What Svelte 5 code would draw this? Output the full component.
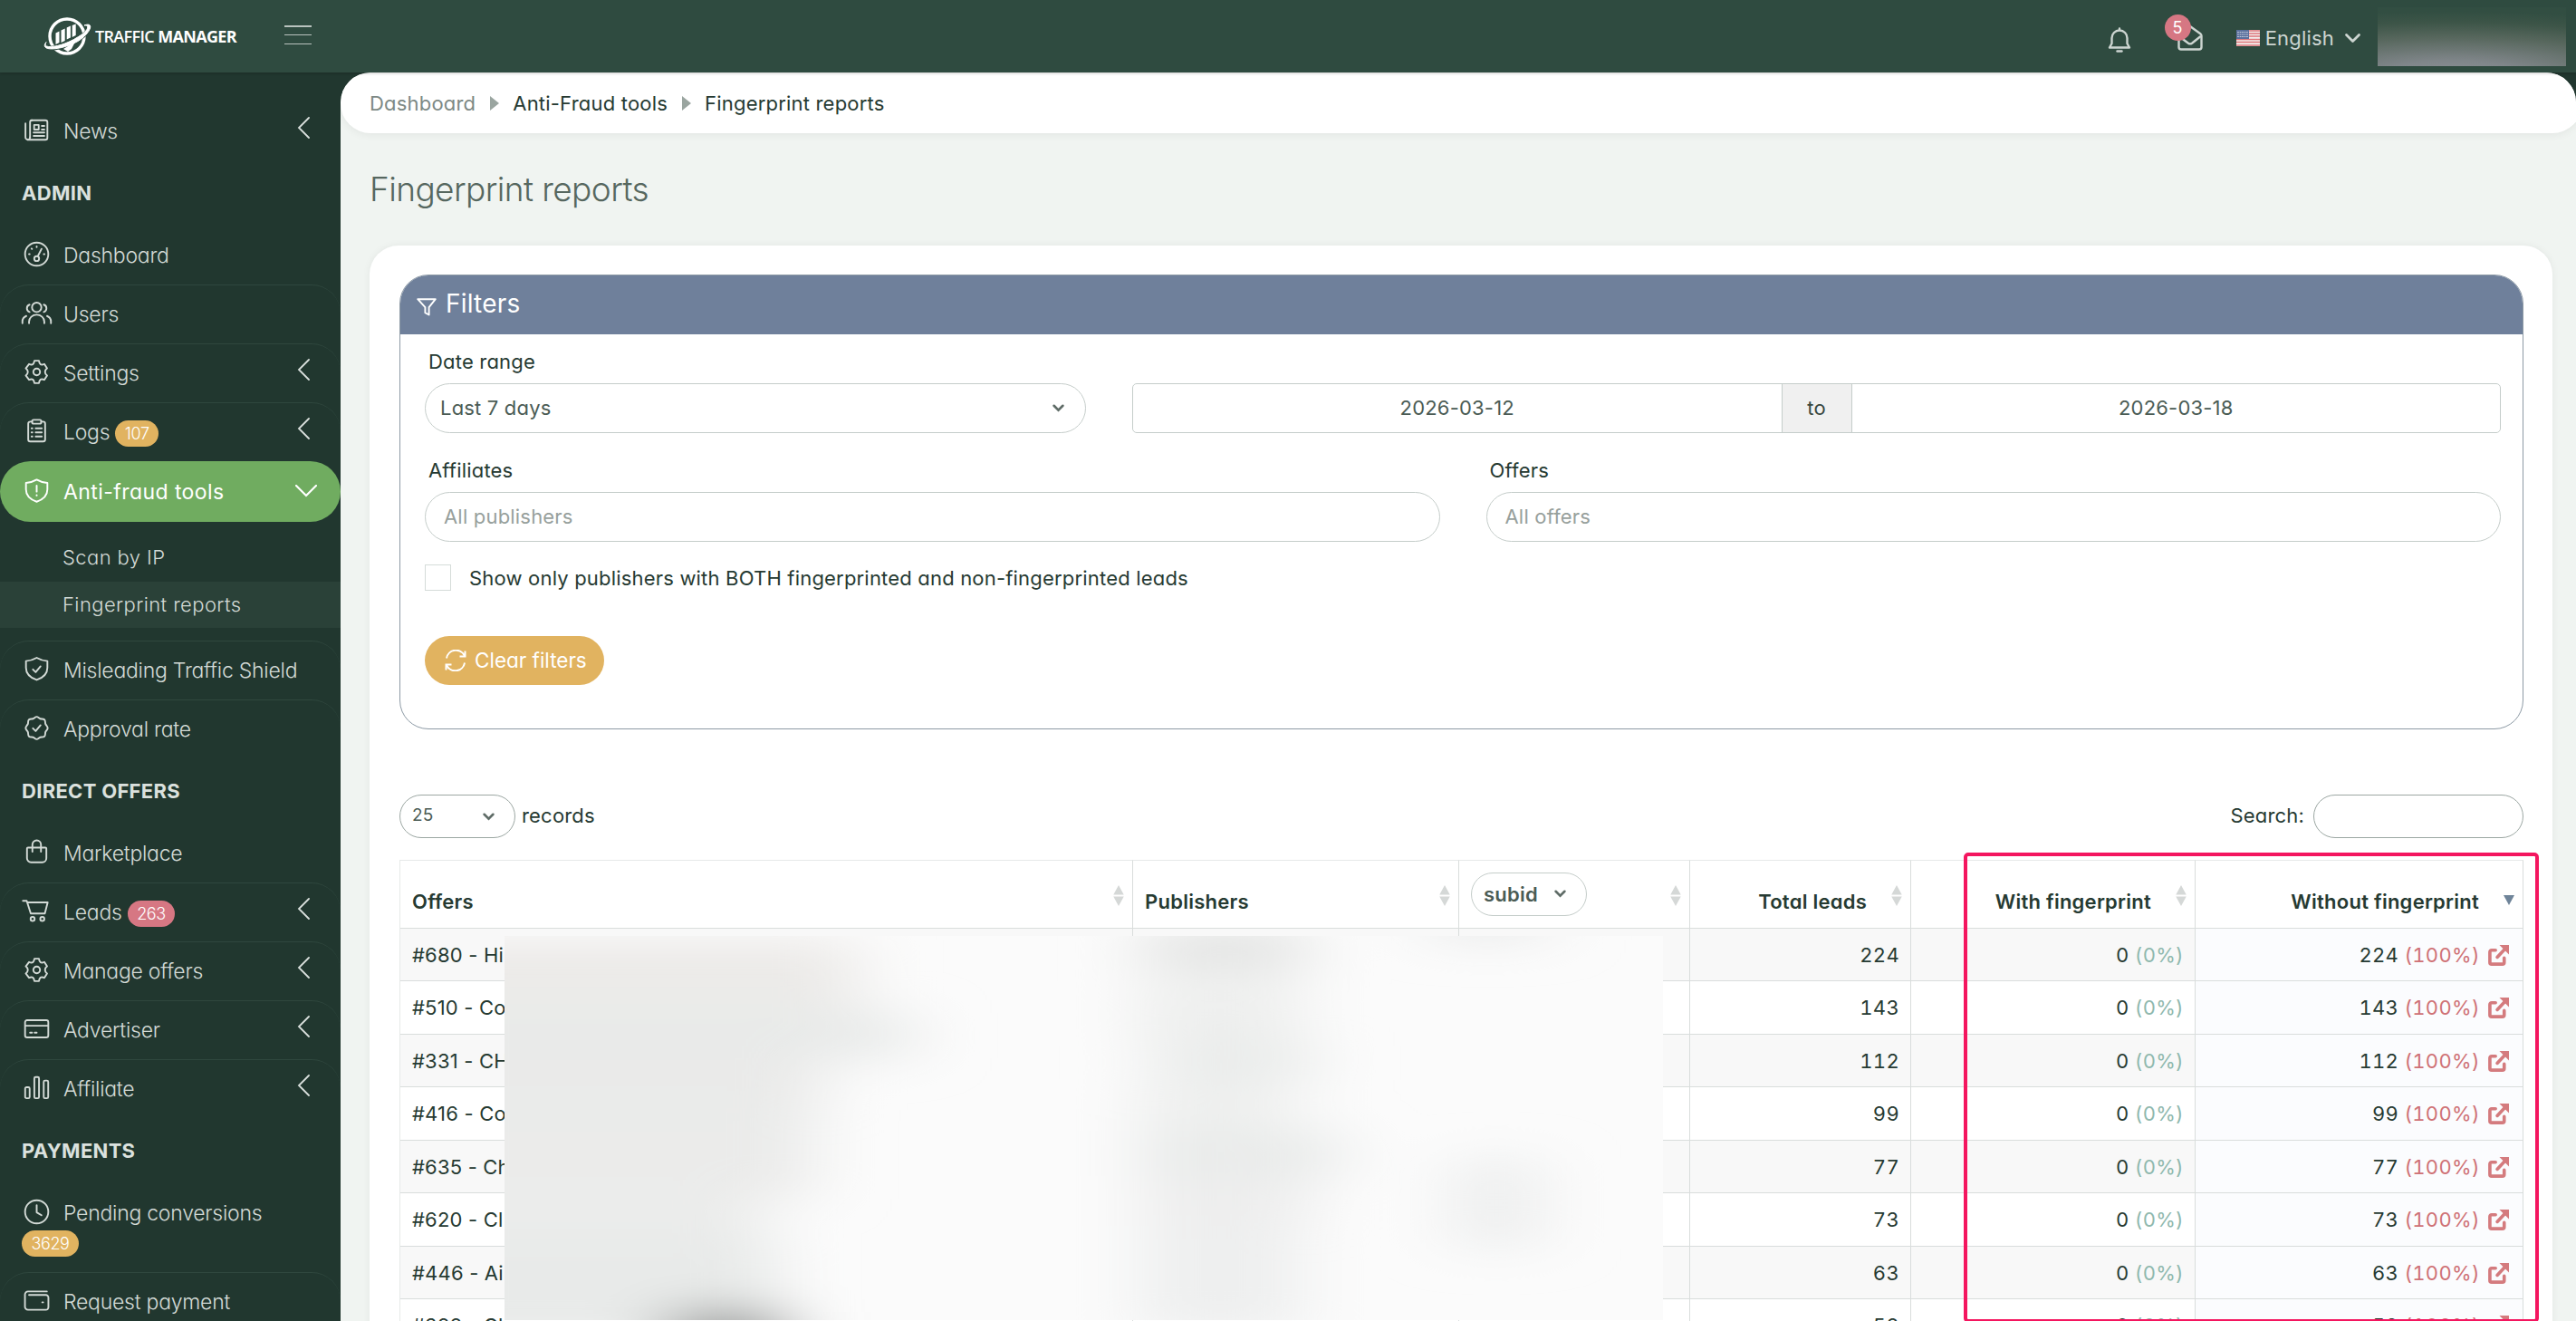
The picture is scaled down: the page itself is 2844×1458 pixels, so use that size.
<script lang="ts">
	type NavItem = {
		label: string;
		icon: string;
		badge?: string;
		badgeColor?: 'amber' | 'rose';
		expandable?: boolean;
		active?: boolean;
		wrap?: boolean;
		children?: { label: string; current?: boolean }[];
	};

	type NavGroup = { title?: string; items: NavItem[] };

	const icons: Record<string, string[]> = {
		news: [
			'M6.500 2.500h14a2 2 0 0 1 2 2v15a2 2 0 0 1-2 2h-17a2.500 2.500 0 0 1-2.500-2.500V5.500',
			'M5.500 19V4.500a2 2 0 0 1 2-2',
			'M5.500 19a2.300 2.300 0 0 1-2.300 2.500',
			'M9.500 7h4.500v4.500h-4.500z',
			'M17 8h2.500M17 11.500h2.500M9 14.500h10.500M9 17.800h10.500'
		],
		gauge: [
			'M12 .6a11.400 11.400 0 1 0 0 22.800a11.400 11.400 0 1 0 0-22.800',
			'M12 14a2.400 2.400 0 1 0 0 4.800a2.400 2.400 0 1 0 0-4.800',
			'M13 14.200l3.800-7.400',
			'M12 4.500v.6M7 6.500l.4.4M4.500 12h.6M19 12h.6'
		],
		users: [
			'M12 1.800a4.600 4.600 0 1 0 0 9.200a4.600 4.600 0 1 0 0-9.200',
			'M4.500 22v-1.500a7.500 6.800 0 0 1 15 0v1.500',
			'M5 3.800a3.800 3.800 0 0 0 0 7.200M19 3.800a3.800 3.800 0 0 1 0 7.200',
			'M-2 22v-1.500a6 6 0 0 1 3.800-5.600M26 22v-1.500a6 6 0 0 0-3.800-5.600'
		],
		gear: [
			'M9.800 1h4.400c.5 3.800 2 4.700 5.300 3.300l2.700 4.200c-2.700 2-2.700 5 0 7l-2.700 4.200c-3.300-1.400-4.800-.5-5.300 3.300H9.800c-.5-3.800-2-4.700-5.300-3.300L1.300 15.500c2.700-2 2.700-5 0-7l3.200-4.200c3.300 1.400 4.800.5 5.300-3.300z',
			'M12 8.700a3.300 3.300 0 1 0 0 6.600a3.300 3.300 0 1 0 0-6.600'
		],
		clipboard: [
			'M7.500 3H5.700a2 2 0 0 0-2 2v15.500a2 2 0 0 0 2 2h12.600a2 2 0 0 0 2-2V5a2 2 0 0 0-2-2h-1.800',
			'M9 1.200h6a1.500 1.500 0 0 1 1.500 1.500v.8a1.500 1.500 0 0 1-1.500 1.500H9a1.500 1.500 0 0 1-1.500-1.500v-.8A1.500 1.500 0 0 1 9 1.200z',
			'M11 9.500h6M11 13.500h6M11 17.500h6M7 9.500h.8M7 13.500h.8M7 17.500h.8'
		],
		shieldAlert: [
			'M12 1.200c3 1.800 6.300 2.900 10.500 3.200v6.500c0 6-4.200 9.800-10.500 12-6.300-2.200-10.500-6-10.500-12V4.400c4.200-.3 7.500-1.400 10.500-3.200z',
			'M12 7v6M12 16.300v.5'
		],
		shieldCheck: [
			'M12 .9c3 1.800 6.300 2.900 10.500 3.200v6.500c0 6-4.200 9.800-10.500 12-6.300-2.200-10.500-6-10.500-12V4.100c4.200-.3 7.500-1.400 10.500-3.200z',
			'M8.300 12.300l2.700 2.700 4.800-5.700'
		],
		sealCheck: [
			'M12 1c1.500 0 2.200 1.500 3.500 1.900 1.300.4 3-.2 4.100.9s.6 2.800 1 4.100c.4 1.300 2.200 2.300 2.200 4.100s-1.800 2.800-2.200 4.100c-.4 1.300.2 3-1 4.100s-2.800.5-4.100.9c-1.300.4-2 1.900-3.500 1.900s-2.200-1.500-3.500-1.900c-1.300-.4-3 .2-4.100-.9s-.6-2.800-1-4.100C3 14.800 1.200 13.800 1.200 12S3 9.200 3.400 7.900c.4-1.300-.2-3 1-4.100s2.800-.5 4.100-.9C9.800 2.500 10.500 1 12 1z',
			'M8.300 12.300l2.700 2.700 4.800-5.700'
		],
		bag: [
			'M3.500 7.500h17a1 1 0 0 1 1 1v9.500a4 4 0 0 1-4 4h-11a4 4 0 0 1-4-4V8.500a1 1 0 0 1 1-1z',
			'M7.800 11.500V4.700a4.200 4.200 0 0 1 8.400 0v6.800'
		],
		cart: [
			'M-1.500 2h3.700l4 12.500h13.800l2.800-11H3.500',
			'M8 17.800a2 2 0 1 0 0 4a2 2 0 1 0 0-4M17.500 17.800a2 2 0 1 0 0 4a2 2 0 1 0 0-4'
		],
		card: [
			'M2.600 3.500h18.800a2 2 0 0 1 2 2v13a2 2 0 0 1-2 2H2.600a2 2 0 0 1-2-2v-13a2 2 0 0 1 2-2z',
			'M1 9h22M5.500 15.800h2M10 15.800h2'
		],
		chart: [
			'M2 11.500h1.800a1.300 1.300 0 0 1 1.300 1.300v8.200a1.300 1.300 0 0 1-1.300 1.300H2a1.300 1.300 0 0 1-1.300-1.300v-8.200A1.300 1.300 0 0 1 2 11.500z',
			'M11 1.500h2a1.300 1.300 0 0 1 1.300 1.300V21a1.300 1.300 0 0 1-1.300 1.300h-2A1.300 1.300 0 0 1 9.700 21V2.800A1.300 1.300 0 0 1 11 1.500z',
			'M20.200 5H22a1.300 1.300 0 0 1 1.300 1.300V21a1.300 1.300 0 0 1-1.300 1.300h-1.800a1.300 1.300 0 0 1-1.300-1.300V6.300A1.300 1.300 0 0 1 20.200 5z'
		],
		clock: [
			'M12 .6a11.400 11.400 0 1 0 0 22.800a11.400 11.400 0 1 0 0-22.800',
			'M12 5.500v7l4.700 2.800'
		],
		wallet: [
			'M22 3H3.500a3 3 0 0 0-3 3v12a3 3 0 0 0 3 3h17.500a2.500 2.500 0 0 0 2.500-2.500V9a2.500 2.500 0 0 0-2.500-2.500H4.500',
			'M17.500 13.700h.8'
		]
	};

	const nav: NavGroup[] = [
		{ items: [{ label: 'News', icon: 'news', expandable: true }] },
		{
			title: 'ADMIN',
			items: [
				{ label: 'Dashboard', icon: 'gauge' },
				{ label: 'Users', icon: 'users' },
				{ label: 'Settings', icon: 'gear', expandable: true },
				{ label: 'Logs', icon: 'clipboard', badge: '107', badgeColor: 'amber', expandable: true },
				{
					label: 'Anti-fraud tools',
					icon: 'shieldAlert',
					active: true,
					children: [{ label: 'Scan by IP' }, { label: 'Fingerprint reports', current: true }]
				},
				{ label: 'Misleading Traffic Shield', icon: 'shieldCheck' },
				{ label: 'Approval rate', icon: 'sealCheck' }
			]
		},
		{
			title: 'DIRECT OFFERS',
			items: [
				{ label: 'Marketplace', icon: 'bag' },
				{ label: 'Leads', icon: 'cart', badge: '263', badgeColor: 'rose', expandable: true },
				{ label: 'Manage offers', icon: 'gear', expandable: true },
				{ label: 'Advertiser', icon: 'card', expandable: true },
				{ label: 'Affiliate', icon: 'chart', expandable: true }
			]
		},
		{
			title: 'PAYMENTS',
			items: [
				{ label: 'Pending conversions', icon: 'clock', badge: '3629', badgeColor: 'amber', wrap: true },
				{ label: 'Request payment', icon: 'wallet' }
			]
		}
	];

	const rows = [
		{ offer: '#680 - Hi', leads: 224 },
		{ offer: '#510 - Co', leads: 143 },
		{ offer: '#331 - CH', leads: 112 },
		{ offer: '#416 - Co', leads: 99 },
		{ offer: '#635 - Ch', leads: 77 },
		{ offer: '#620 - Cl', leads: 73 },
		{ offer: '#446 - Ai', leads: 63 },
		{ offer: '#399 - Ch', leads: 59 }
	];

	// blurred-out cell contents: x, y, width, height, fill
	const smudges: [number, number, number, number, string][] = [
		[-90, 4, 480, 80, '#eceae8'],
		[-90, 60, 480, 60, '#ebebe9'],
		[-90, 85, 540, 50, '#e8eae9'],
		[-90, 130, 440, 60, '#eaeae9'],
		[-90, 180, 430, 60, '#eaebea'],
		[-90, 230, 430, 60, '#ebebea'],
		[-90, 280, 370, 70, '#ebeceb'],
		[-90, 330, 390, 120, '#e8eae9'],
		[180, 415, 130, 60, '#969897'],
		[705, -10, 180, 50, '#e3e4e3'],
		[700, 50, 180, 70, '#eeefee'],
		[715, 120, 180, 40, '#eaeceb'],
		[700, 160, 170, 60, '#eff0ef'],
		[700, 215, 225, 50, '#e9ebea'],
		[700, 265, 190, 55, '#eeeeee'],
		[700, 320, 180, 120, '#eeefef'],
		[1020, -40, 130, 45, '#eaebeb'],
		[1045, 245, 100, 100, '#eeefef']
	];
</script>

{#snippet icon(name: string)}
	<svg class="icon" viewBox="0 0 24 24" aria-hidden="true">
		{#each icons[name] as d}
			<path {d} />
		{/each}
	</svg>
{/snippet}

{#snippet caret()}
	<svg class="caret" viewBox="0 0 12 8" aria-hidden="true"><path d="M1.500 1.500L6 6l4.500-4.500" /></svg>
{/snippet}

{#snippet sorter()}
	<svg class="sorter" viewBox="0 0 12 24" aria-hidden="true">
		<path d="M6 0l6 11H0zM6 24l6-11H0z" />
	</svg>
{/snippet}

<div class="app">
	<header class="topbar">
		<div class="brand">
			<svg class="emblem" viewBox="0 0 54 44" aria-hidden="true">
				<circle cx="26" cy="22" r="19" fill="none" stroke="#fff" stroke-width="3.400" />
				<path d="M13.500 18.500l4-2V29l-4 2zM19.500 15.500l4.200-2V27l-4.200 2zM25.700 12.500l4.200-2v13l-4.200 2zM31.700 10l4-1.500V21l-4 2z" fill="#fff" />
				<path d="M3.500 30.500C-3 43 46 28 50.500 13c1.200-4-1.500-4.800-4.500-3.200" fill="none" stroke="#2f4b40" stroke-width="5" />
				<path d="M3 28.500C-6 40 22 37 38 27.500 52 19 57 5.500 45 10c7-.8 4 6.500-6.500 12.500C24 32.500-3 38.500 3 28.500z" fill="#fff" stroke="#fff" stroke-width="1" />
				<path d="M22 36l13-8-4 8-4 3z" fill="#fff" />
			</svg>
			<span class="brand-name"><span>TRAFFIC</span> MANAGER</span>
		</div>
		<button class="menu-toggle" aria-label="Menu"><i></i><i></i><i></i></button>

		<div class="tools">
			<svg class="bell" viewBox="0 0 26 30" aria-hidden="true">
				<path d="M13 2.500v1.500M4.500 19V13a8.500 8.500 0 0 1 17 0v6l2.500 4.500H2z" />
				<path d="M10.500 27.500h5" />
			</svg>
			<div class="mail">
				<svg viewBox="0 0 28 28" aria-hidden="true">
					<path d="M1.500 12v12a2.500 2.500 0 0 0 2.500 2.500h20a2.500 2.500 0 0 0 2.500-2.500V11.500a3 3 0 0 0-1.200-2.300L16 2.500a3 3 0 0 0-4 0L2.700 9.500a3 3 0 0 0-1.200 2.500z" />
					<path d="M3 13l9 6.700a3.500 3.500 0 0 0 4 0l9-7.200" />
				</svg>
				<span class="mail-count">5</span>
			</div>
			<svg class="flag" viewBox="0 0 26 18" aria-hidden="true">
				<rect width="26" height="18" fill="#f3efee" />
				<path d="M0 1h26M0 4h26M0 7h26M0 10.500h26M0 13.500h26M0 17h26" stroke="#dd7479" stroke-width="1.500" />
				<rect width="14" height="10" fill="#5a6f9c" />
				<path d="M1.500 2.500h12M1.500 5h12M1.500 7.500h12" stroke="#c3cbdc" stroke-width="1" stroke-dasharray="1 1.500" />
			</svg>
			<span class="lang">English</span>
			<svg class="lang-caret" viewBox="0 0 17 11" aria-hidden="true"><path d="M1.500 1.500l7 7 7-7" /></svg>
			<div class="account"></div>
		</div>
	</header>

	<div class="body">
		<nav class="sidebar">
			{#each nav as group}
				{#if group.title}
					<h6>{group.title}</h6>
				{/if}
				<ul>
					{#each group.items as item}
						<li class:active={item.active} class:wrap={item.wrap}>
							<a class="nav-link" href="#top">
								{@render icon(item.icon)}
								<span>{item.label}</span>
								{#if item.badge}
									<span class="badge {item.badgeColor}">{item.badge}</span>
								{/if}
								{#if item.expandable || item.active}
									<svg class="chevron" viewBox="0 0 14 24" aria-hidden="true"><path d="M13 1L2 12l11 11" /></svg>
								{/if}
							</a>
							{#if item.children}
								<div class="subnav">
									{#each item.children as child}
										<a class:current={child.current} href="#top">{child.label}</a>
									{/each}
								</div>
							{/if}
						</li>
					{/each}
				</ul>
			{/each}
		</nav>

		<main>
			<div class="breadcrumb">
				<span class="muted">Dashboard</span>
				<i></i>
				<span>Anti-Fraud tools</span>
				<i></i>
				<span>Fingerprint reports</span>
			</div>

			<h1>Fingerprint reports</h1>

			<section class="card">
				<div class="panel">
					<div class="panel-head">
						<svg viewBox="0 0 22 20" aria-hidden="true"><path d="M1.200 1.200h19.600l-7.200 9v8.300l-4.200-2.300v-6z" /></svg>
						<h2>Filters</h2>
					</div>
					<div class="panel-body">
						<span class="label">Date range</span>
						<div class="date-row">
							<div class="select">Last 7 days {@render caret()}</div>
							<div class="date-group">
								<span>2026-03-12</span>
								<span class="to">to</span>
								<span>2026-03-18</span>
							</div>
						</div>
						<div class="two-cols">
							<div>
								<span class="label">Affiliates</span>
								<div class="input">All publishers</div>
							</div>
							<div>
								<span class="label">Offers</span>
								<div class="input">All offers</div>
							</div>
						</div>
						<div class="check">
							<span class="box"></span>
							<span class="check-label">Show only publishers with BOTH fingerprinted and non-fingerprinted leads</span>
						</div>
						<button class="clear">
							<svg viewBox="0 0 24 24" aria-hidden="true">
								<path d="M22.500 1.500v6h-6M1.500 22.500v-6h6" />
								<path d="M2 9.500A10.500 10.500 0 0 1 22 7M22 14.500A10.500 10.500 0 0 1 2 17" />
							</svg>
							<span>Clear filters</span>
						</button>
					</div>
				</div>

				<div class="table-tools">
					<div class="length"><span>25</span> {@render caret()}</div>
					<span class="records">records</span>
					<span class="search-label">Search:</span>
					<input type="text" aria-label="Search" />
				</div>

				<div class="table-wrap">
					<table>
						<colgroup>
							<col class="c-offer" /><col class="c-pub" /><col class="c-sub" /><col class="c-total" />
							<col class="c-gap" /><col class="c-with" /><col class="c-without" />
						</colgroup>
						<thead>
							<tr>
								<th>Offers {@render sorter()}</th>
								<th>Publishers {@render sorter()}</th>
								<th><span class="subid">subid {@render caret()}</span>{@render sorter()}</th>
								<th class="num">Total leads {@render sorter()}</th>
								<th class="gap"></th>
								<th class="num">With fingerprint {@render sorter()}</th>
								<th class="num">
									Without fingerprint
									<svg class="sorted" viewBox="0 0 12 11" aria-hidden="true"><path d="M0 0h12L6 11z" /></svg>
								</th>
							</tr>
						</thead>
						<tbody>
							{#each rows as row}
								<tr>
									<td>{row.offer}</td>
									<td></td>
									<td></td>
									<td class="num">{row.leads}</td>
									<td class="gap"></td>
									<td class="num">0 <span class="ok">(0%)</span></td>
									<td class="num last">
										{row.leads} <span class="bad">(100%)</span>
										<svg class="ext" viewBox="0 0 24 24" aria-hidden="true">
											<path d="M8.500 6H4a2 2 0 0 0-2 2v12a2 2 0 0 0 2 2h12.500a2 2 0 0 0 2-2v-5" />
											<path d="M10.500 14L20 4" />
											<path class="head" d="M13 0H24v11z" />
										</svg>
									</td>
								</tr>
							{/each}
						</tbody>
					</table>
					<svg class="redacted" viewBox="0 0 1279 424" aria-hidden="true">
						<defs>
							<filter id="soft" filterUnits="userSpaceOnUse" x="-300" y="-150" width="1800" height="750">
								<feGaussianBlur stdDeviation="40 22" />
							</filter>
						</defs>
						<rect width="1279" height="424" fill="#fbfbfb" />
						<g filter="url(#soft)">
							{#each smudges as [x, y, w, h, fill]}
								<rect {x} {y} width={w} height={h} {fill} />
							{/each}
						</g>
					</svg>
					<div class="highlight"></div>
				</div>
			</section>
		</main>
	</div>
</div>

<style>
	:global(body) {
		margin: 0;
		overflow: hidden;
	}

	.app {
		height: 1458px;
		overflow: hidden;
		background: #21372f;
		color: #263a32;
		font-family: Inter, 'Liberation Sans', sans-serif;
		font-feature-settings: 'cv11';
		font-size: 22px;
		letter-spacing: 0.19px;
	}

	.topbar {
		position: relative;
		display: flex;
		align-items: center;
		height: 80px;
		padding: 0 11px 0 48px;
		box-sizing: border-box;
		background: #2f4b40;
		box-shadow: 0 1px 3px rgba(0, 0, 0, 0.2);
	}

	.brand {
		display: flex;
		align-items: center;
		width: 266px;
	}

	.emblem {
		width: 54px;
		height: 44px;
		overflow: visible;
	}

	.brand-name {
		margin-left: 3px;
		color: #fff;
		font-family: 'Open Sans', sans-serif;
		font-weight: 700;
		font-size: 18px;
		letter-spacing: -0.65px;
		white-space: nowrap;
	}

	.brand-name span {
		font-weight: 600;
	}

	.menu-toggle {
		display: flex;
		flex-direction: column;
		justify-content: space-between;
		width: 30px;
		height: 21px;
		margin-top: -3px;
		padding: 0;
		border: none;
		background: none;
	}

	.menu-toggle i {
		height: 1.5px;
		background: #b9c3be;
	}

	.tools {
		display: flex;
		align-items: center;
		height: 80px;
		margin-left: auto;
		color: #cdd5d1;
	}

	.tools svg {
		fill: none;
		stroke: #cdd5d1;
		stroke-width: 2.4;
		stroke-linecap: round;
		stroke-linejoin: round;
	}

	.bell {
		width: 26px;
		height: 30px;
		margin-top: 8px;
	}

	.mail {
		position: relative;
		width: 28px;
		height: 28px;
		margin: 4px 0 0 51px;
	}

	.mail svg {
		width: 28px;
		height: 28px;
	}

	.mail-count {
		position: absolute;
		left: -14px;
		top: -12px;
		width: 29px;
		height: 29px;
		border-radius: 50%;
		background: #d67783;
		color: #fff;
		font-size: 18px;
		line-height: 29px;
		text-align: center;
	}

	.tools .flag {
		width: 26px;
		height: 18px;
		margin-left: 37px;
		margin-top: 4px;
		stroke: none;
	}

	.lang {
		margin: 3px 0 0 6px;
	}

	.tools .lang-caret {
		width: 17px;
		height: 11px;
		margin: 4px 19px 0 12px;
		overflow: visible;
		stroke-width: 2.8;
	}

	.account {
		width: 208px;
		height: 65px;
		background: radial-gradient(ellipse 180% 105% at 40% 112%, #8a8e93 0%, #80868a 20%, #57675d 58%, #3d5548 82%, #324e42 100%);
	}

	.body {
		display: flex;
	}

	.sidebar {
		flex-shrink: 0;
		width: 376px;
		padding-top: 32px;
		box-sizing: border-box;
		color: #d3dad6;
	}

	.sidebar ul {
		margin: 0;
		padding: 0;
		list-style: none;
	}

	.sidebar h6 {
		height: 72px;
		margin: 0;
		padding-left: 24px;
		color: #dbe1de;
		font-size: 22px;
		font-weight: 700;
		letter-spacing: 0.3px;
		line-height: 72px;
	}

	.nav-link {
		display: flex;
		align-items: center;
		height: 65px;
		padding: 0 34px 0 27px;
		box-sizing: border-box;
		border-top: 1px solid transparent;
		border-radius: 32px;
		color: inherit;
		font-size: 23px;
		font-weight: 300;
		letter-spacing: -0.25px;
		text-decoration: none;
		white-space: nowrap;
	}

	li + li .nav-link {
		border-top-color: #2f473e;
	}

	.icon {
		width: 27px;
		height: 27px;
		margin: -4px 16px 0 0;
		overflow: visible;
		fill: none;
		stroke: #d3dad6;
		stroke-width: 1.7;
		stroke-linecap: round;
		stroke-linejoin: round;
	}

	.badge {
		height: 29px;
		margin: 2px 0 0 6px;
		padding: 0 10.5px;
		border-radius: 15px;
		color: #fff;
		font-size: 18px;
		letter-spacing: -0.4px;
		line-height: 29px;
	}

	.badge.amber {
		background: #e1b360;
	}

	.badge.rose {
		background: #d67783;
	}

	.chevron {
		width: 14px;
		height: 24px;
		margin: -8px 0 0 auto;
		fill: none;
		stroke: #d9dfdc;
		stroke-width: 1.8;
		stroke-linecap: round;
	}

	li.active .nav-link {
		height: 67px;
		border-radius: 34px;
		border-color: transparent;
		background: #70ac60;
		color: #fff;
		font-weight: 400;
		letter-spacing: 0.43px;
	}

	li.active .icon {
		stroke: #fff;
	}

	li.active .chevron {
		margin: -3px -3px 0 auto;
		stroke: #fff;
		stroke-width: 2.2;
		transform: rotate(-90deg);
	}

	.wrap .nav-link {
		flex-wrap: wrap;
		align-content: flex-start;
		height: 98px;
		padding-top: 18px;
	}

	.wrap .badge {
		margin: 5px 100px 0 -3px;
	}

	.subnav {
		padding: 14px 0;
	}

	.subnav a {
		display: block;
		height: 52px;
		padding-left: 69px;
		color: inherit;
		font-size: 22px;
		font-weight: 300;
		letter-spacing: 0.4px;
		line-height: 50px;
		text-decoration: none;
	}

	.subnav a.current {
		height: 51px;
		background: #2a4138;
	}

	main {
		flex: 1;
		min-width: 0;
		height: 1378px;
		overflow: hidden;
		border-radius: 33px 33px 0 0;
		background: #f0f4f1;
	}

	.breadcrumb {
		display: flex;
		align-items: center;
		width: 2475px;
		height: 67px;
		padding-left: 32px;
		box-sizing: border-box;
		border-radius: 33px;
		background: #fff;
		box-shadow: 0 2px 10px rgba(0, 0, 0, 0.06);
		letter-spacing: 0.2px;
	}

	.breadcrumb .muted {
		color: #7d8985;
	}

	.breadcrumb i {
		margin: 0 15px 0 16px;
		border: 8px solid transparent;
		border-left: 10px solid #9aa5a0;
		border-right: none;
	}

	h1 {
		height: 44px;
		margin: 40px 0 0 32px;
		color: #56675f;
		font-size: 37px;
		font-weight: 300;
		letter-spacing: -0.6px;
		line-height: 44px;
	}

	.card {
		width: 2410px;
		height: 1300px;
		margin: 40px 0 0 32px;
		padding: 32px 32px 0 33px;
		box-sizing: border-box;
		border-radius: 32px;
		background: #fff;
		box-shadow: 0 0 8px rgba(0, 0, 0, 0.06);
	}

	.panel {
		height: 502px;
		box-sizing: border-box;
		overflow: hidden;
		border: 1px solid #8d9aa5;
		border-radius: 32px;
	}

	.panel-head {
		display: flex;
		align-items: center;
		height: 65px;
		padding-left: 18px;
		background: #6f809b;
		color: #fff;
	}

	.panel-head svg {
		width: 22px;
		height: 20px;
		margin-top: 5px;
		fill: none;
		stroke: #fff;
		stroke-width: 1.9;
		stroke-linejoin: round;
	}

	.panel-head h2 {
		margin: -3px 0 0 10px;
		font-size: 28px;
		font-weight: 400;
	}

	.panel-body {
		padding: 15px 24px 0 27px;
	}

	.label {
		display: block;
		height: 30px;
		margin: 0 0 9px 4px;
		line-height: 30px;
	}

	.date-row {
		display: flex;
		gap: 51px;
	}

	.select,
	.input {
		height: 55px;
		box-sizing: border-box;
		border: 1px solid #c5cdca;
		border-radius: 28px;
		line-height: 53px;
	}

	.select {
		display: flex;
		align-items: center;
		justify-content: space-between;
		width: 730px;
		padding: 0 23px 0 16px;
		color: #4b5c55;
	}

	.caret {
		width: 13px;
		height: 9px;
		fill: none;
		stroke: #5f6c67;
		stroke-width: 2.4;
		stroke-linecap: round;
	}

	.date-group {
		display: flex;
		flex: 1;
		height: 55px;
		box-sizing: border-box;
		border: 1px solid #c5cdca;
		border-radius: 5px;
		color: #4b5c55;
		line-height: 53px;
		text-align: center;
	}

	.date-group span {
		flex: 1;
	}

	.date-group .to {
		flex: 0 0 76px;
		border: solid #c5cdca;
		border-width: 0 1px;
		background: #f0f0f0;
		color: #39483f;
	}

	.two-cols {
		display: grid;
		grid-template-columns: 1fr 1fr;
		gap: 51px;
		margin-top: 26px;
	}

	.input {
		padding-left: 20px;
		color: #97a09c;
	}

	.check {
		display: flex;
		align-items: center;
		margin-top: 25px;
	}

	.box {
		width: 27px;
		height: 27px;
		border: 1px solid #d5dcd9;
	}

	.check-label {
		margin-left: 20px;
	}

	.clear {
		display: flex;
		align-items: center;
		width: 198px;
		height: 54px;
		margin-top: 50px;
		padding: 0 0 0 22px;
		border: none;
		border-radius: 27px;
		background: #e1b360;
		color: #fff;
		font: inherit;
		letter-spacing: 0;
		font-size: 22.5px;
		white-space: nowrap;
	}

	.clear span {
		margin-top: -1px;
	}

	.clear svg {
		width: 24px;
		height: 24px;
		margin-right: 9px;
		fill: none;
		stroke: #fff;
		stroke-width: 2;
	}

	.table-tools {
		display: flex;
		align-items: center;
		height: 48px;
		margin-top: 72px;
	}

	.length {
		display: flex;
		align-items: center;
		justify-content: space-between;
		width: 128px;
		height: 48px;
		padding: 0 22px 0 13px;
		box-sizing: border-box;
		border: 1px solid #9ca7a3;
		border-radius: 24px;
		color: #4b5c55;
		font-size: 19px;
	}

	.length span {
		margin-top: -3px;
	}

	.records {
		margin: -3px 0 0 7px;
	}

	.search-label {
		margin: -3px 10px 0 auto;
	}

	.table-tools input {
		width: 232px;
		height: 48px;
		padding: 0 14px;
		box-sizing: border-box;
		border: 1px solid #9ca7a3;
		border-radius: 24px;
		background: #fff;
	}

	.table-wrap {
		position: relative;
		margin-top: 24px;
	}

	table {
		width: 2345px;
		table-layout: fixed;
		border-collapse: separate;
		border-spacing: 0;
		border-left: 1px solid #e6e9e8;
	}

	.c-offer {
		width: 809px;
	}

	.c-pub {
		width: 360px;
	}

	.c-sub {
		width: 255px;
	}

	.c-total {
		width: 244px;
	}

	.c-gap {
		width: 59px;
	}

	.c-with {
		width: 255px;
	}

	th,
	td {
		padding: 0 13px;
		border: solid #d9dddc;
		border-width: 0 1px 1px 0;
		text-align: left;
		white-space: nowrap;
	}

	th {
		position: relative;
		height: 76px;
		padding-top: 15px;
		box-sizing: border-box;
		border-top: 1px solid #e6e9e8;
		font-size: 22px;
		font-weight: 600;
		letter-spacing: 0.25px;
	}

	td {
		height: 57px;
	}

	tr:nth-child(even) td {
		height: 58px;
	}

	tbody tr:nth-child(odd) td {
		background: #f8f8f8;
	}

	tbody td.last,
	tbody tr:nth-child(odd) td.last {
		background: #fbfcfe;
	}

	.num {
		text-align: right;
	}

	td.num {
		padding-right: 12px;
		font-variant-numeric: tabular-nums;
		letter-spacing: 0.3px;
	}

	td.last {
		padding-right: 15px;
	}

	th.num {
		padding-right: 48px;
		padding-left: 0;
	}

	.gap {
		border-right: none;
	}

	.sorter {
		position: absolute;
		top: 27px;
		right: 9px;
		width: 12px;
		height: 23px;
		fill: #d5d8d7;
	}

	.sorted {
		position: absolute;
		top: 38px;
		right: 9px;
		width: 12px;
		height: 11px;
		fill: #6f8499;
	}

	.subid {
		display: flex;
		align-items: center;
		justify-content: space-between;
		width: 128px;
		height: 48px;
		margin-top: -16px;
		padding: 0 22px 0 13px;
		box-sizing: border-box;
		border: 1px solid #c5cdca;
		border-radius: 24px;
		color: #4b5c55;
	}

	.ok {
		color: #8fb8ae;
	}

	.bad {
		color: #cf7276;
	}

	.ext {
		width: 23px;
		height: 23px;
		margin-left: 3px;
		vertical-align: -4px;
		fill: none;
		stroke: #d47b7e;
		stroke-width: 3.8;
		stroke-linecap: round;
	}

	.ext .head {
		fill: #d47b7e;
		stroke: none;
	}

	.redacted {
		position: absolute;
		left: 116px;
		top: 84px;
		width: 1279px;
		height: 424px;
	}

	.highlight {
		position: absolute;
		left: 1727px;
		top: -8px;
		width: 627px;
		height: 511px;
		border: 4px solid #f4165f;
		border-radius: 5px;
	}
</style>
